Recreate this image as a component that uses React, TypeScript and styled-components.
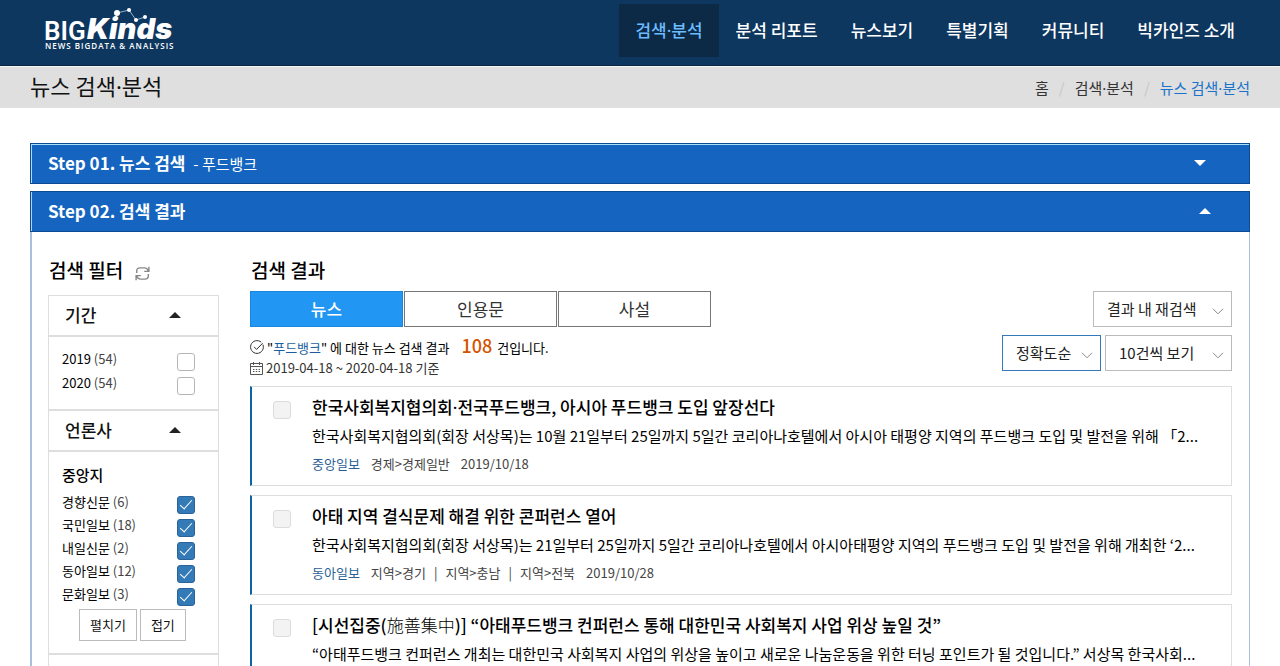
import React from "react";
import styled, { createGlobalStyle } from "styled-components";

const GlobalStyle = createGlobalStyle`
  *, *::before, *::after { box-sizing: border-box; }
  html { overflow-x: hidden; }
  body {
    margin: 0;
    background: #fff;
    color: #000;
    font-family: "Noto Sans CJK KR", "Noto Sans", sans-serif;
    font-size: 13px;
    line-height: 20px;
  }
  h1, h2, h3, p, ul, ol { margin: 0; padding: 0; font-weight: 400; }
  ul, ol { list-style: none; }
  a { color: inherit; text-decoration: none; }
  button, select, input { font-family: inherit; margin: 0; }
`;

const Header = styled.header`
  display: flex;
  justify-content: space-between;
  align-items: flex-start;
  height: 66px;
  padding: 4px 29px 0 44px;
  background: #0d375f;
  border-bottom: 1px solid #0a2745;
`;

const LogoLink = styled.a`
  display: block;
  line-height: 0;
`;

const Nav = styled.nav`
  display: flex;
  gap: 1px;
`;

const NavLink = styled.a<{ $active?: boolean }>`
  height: 53px;
  padding: 0 16px;
  font-size: 17px;
  font-weight: 500;
  line-height: 52px;
  white-space: nowrap;
  color: ${(p) => (p.$active ? "#6dbcff" : "#fff")};
  background: ${(p) => (p.$active ? "#0c2a46" : "transparent")};
`;

const Dot = styled.span`
  font-family: "Noto Sans", sans-serif;
  line-height: 1;
`;

const TitleBar = styled.div`
  display: flex;
  justify-content: space-between;
  align-items: center;
  height: 42px;
  padding: 0 30px;
  background: #dfdfdf;
  border-top: 1px solid #f4f4f4;
`;

const PageTitle = styled.h1`
  padding-bottom: 5px;
  font-size: 22px;
  line-height: 32px;
  color: #111;
`;

const Crumbs = styled.ol`
  display: flex;
  gap: 10px;
  font-size: 15px;
  line-height: 22px;
  color: #333;

  li + li::before {
    content: "/";
    margin-right: 10px;
    color: #c4c8cc;
  }
  [aria-current] { color: #1a73c9; }
`;

const Content = styled.main`
  display: flex;
  flex-direction: column;
  gap: 7px;
  padding: 35px 30px 0;
`;

const StepBar = styled.button`
  display: flex;
  justify-content: space-between;
  align-items: center;
  width: 100%;
  height: 41px;
  padding: 0 38px 2px 17px;
  border: 1px solid #0c4a94;
  background: #1565c0;
  box-shadow: inset 1px 0 #a9d7f5;
  color: #fff;
  font-size: 17px;
  font-weight: 700;
  text-align: left;

  &[aria-expanded="false"] {
    padding-right: 43px;
    box-shadow: inset 1px 1px #a9e0f5;
  }
`;

const StepKeyword = styled.span`
  margin-left: 4px;
  font-size: 15px;
  font-weight: 400;
`;

const Triangle = styled.span<{ $down?: boolean; $dark?: boolean }>`
  border: 5px solid transparent;
  border-width: ${(p) => (p.$down ? "6px 6px 0" : "0 6px 6px")};
  border-${(p) => (p.$down ? "top" : "bottom")}-color: ${(p) => (p.$dark ? "#222" : "#fff")};
`;

const StepBody = styled.div`
  display: flex;
  gap: 31px;
  padding: 24px 17px 0 16px;
  border: solid #a9bfdb;
  border-width: 0 1px 0 2px;
`;

const Sidebar = styled.aside`
  flex: 0 0 171px;
`;

const SectionTitle = styled.h2`
  display: flex;
  align-items: center;
  gap: 12px;
  height: 35px;
  padding: 0 1px 8px;
  font-size: 19px;
  font-weight: 500;
  line-height: 27px;
`;

const IconButton = styled.button`
  display: flex;
  padding: 7px 0 0;
  border: 0;
  background: none;
  color: #888;
`;

const FilterBox = styled.div`
  margin-top: 4px;
  border: solid #dedede;
  border-width: 1px 1px 0;
`;

const FilterHead = styled.button`
  display: flex;
  justify-content: space-between;
  align-items: center;
  width: 100%;
  height: 41px;
  padding: 0 37px 2px 16px;
  border: 0;
  border-bottom: 2px solid #dedede;
  background: #fff;
  color: #111;
  font-size: 17px;
  font-weight: 500;
`;

const FilterBody = styled.div`
  padding: 12px 23px 12px 13px;
  border-bottom: 2px solid #dedede;
`;

const GroupTitle = styled.h3`
  padding-bottom: 6px;
  font-size: 15px;
  font-weight: 500;
  line-height: 22px;
`;

const FilterRow = styled.label<{ $tight?: boolean }>`
  display: flex;
  justify-content: space-between;
  align-items: flex-start;
  height: ${(p) => (p.$tight ? "23px" : "24px")};
  line-height: 20px;
`;

const Count = styled.span`
  color: #444;
`;

const CheckBox = styled.input`
  appearance: none;
  display: grid;
  place-items: center;
  flex: none;
  width: 18px;
  height: 18px;
  border: 1px solid #b5b5b5;
  border-radius: 3px;
  background: #fff;

  ${FilterRow} & { margin-top: 4px; }

  &:checked {
    border-color: #2a6399;
    background: #337ab7;
  }
  &:checked::after {
    content: "";
    width: 6px;
    height: 12px;
    margin-bottom: 4px;
    border: solid #fff;
    border-width: 0 1px 1px 0;
    transform: rotate(42deg);
  }
`;

const ResultCheck = styled(CheckBox)`
  margin-top: 6px;
  border-color: #dcdcdc;
  background: #f3f3f3;
`;

const FoldButtons = styled.div`
  display: flex;
  gap: 3px;
  padding: 2px 0 0 17px;
`;

const FoldButton = styled.button`
  height: 32px;
  padding: 0 10px 2px;
  border: 1px solid #bbb;
  background: #fff;
  color: #111;
  font-size: 13px;
`;

const Results = styled.section`
  flex: 1;
  min-width: 0;
`;

const ResultTop = styled.div`
  display: flex;
  justify-content: space-between;
  height: 95px;
`;

const Tabs = styled.div`
  display: flex;
  gap: 1px;
`;

const Tab = styled.button`
  width: 153px;
  height: 36px;
  padding: 0 0 2px;
  border: 1px solid #777;
  background: #fff;
  color: #333;
  font-size: 17px;

  &[aria-selected="true"] {
    border-color: #1c86df;
    background: #2196f3;
    color: #fff;
    font-weight: 500;
  }
`;

const Summary = styled.p`
  display: flex;
  align-items: center;
  gap: 3px;
  padding-top: 8px;
  font-size: 13px;
  line-height: 20px;
`;

const Keyword = styled.span`
  color: #1a5f9e;
`;

const Total = styled.strong`
  margin: 0 5px 0 12px;
  color: #d35400;
  font-size: 18px;
  font-weight: 500;
`;

const Period = styled.p`
  display: flex;
  align-items: center;
  gap: 3px;
  color: #333;
  font-size: 13px;
  line-height: 20px;
`;

const Controls = styled.div`
  display: flex;
  flex-direction: column;
  align-items: flex-end;
  gap: 8px;
`;

const ControlRow = styled.div`
  display: flex;
  gap: 4px;
`;

const SelectWrap = styled.label<{ $width: number }>`
  display: grid;
  align-items: center;
  width: ${(p) => p.$width}px;

  & > * { grid-area: 1 / 1; }
  svg {
    justify-self: end;
    margin: 4px 8px 0 0;
    color: #888;
    pointer-events: none;
  }
`;

const Select = styled.select<{ $focus?: boolean }>`
  appearance: none;
  width: 100%;
  height: 36px;
  padding: 0 13px 2px;
  border: 1px solid ${(p) => (p.$focus ? "#337ab7" : "#bbb")};
  border-radius: 0;
  background: #fff;
  color: #222;
  font-size: 15px;
`;

const ResultList = styled.ul`
  display: flex;
  flex-direction: column;
  gap: 9px;
`;

const ResultCard = styled.li`
  display: flex;
  gap: 21px;
  height: 100px;
  padding: 8px 20px 0 21px;
  border: 1px solid #dedede;
  border-left: 2px solid #0b65a5;
`;

const ResultText = styled.div`
  flex: 1;
  min-width: 0;
`;

const ResultTitle = styled.h3`
  font-size: 17px;
  font-weight: 500;
  line-height: 24px;
  white-space: nowrap;
`;

const Hanja = styled.span`
  font-weight: 300;
`;

const Excerpt = styled.p`
  padding: 6px 0 7px;
  overflow: hidden;
  font-size: 15px;
  line-height: 22px;
  white-space: nowrap;
`;

const Meta = styled.p`
  display: flex;
  gap: 11px;
  color: #444;
  font-size: 13px;
  line-height: 20px;

  a { color: #2a5f95; }
`;

const Topics = styled.span`
  span + span::before {
    content: "|";
    margin: 0 8px;
  }
`;

const Logo = () => (
  <svg width="134" height="48" viewBox="0 0 134 48" role="img" aria-label="BIGKinds" fill="#fff">
    <text x="0" y="36" fontFamily="Roboto, sans-serif" fontSize="26" fontWeight="600">BIG</text>
    <text x="43" y="35" fontFamily="Inter, sans-serif" fontSize="29" fontWeight="900" fontStyle="italic">Kinds</text>
    <text x="1" y="45" fontFamily="'Open Sans', sans-serif" fontSize="8" fontWeight="600" letterSpacing="1">NEWS BIGDATA &amp; ANALYSIS</text>
    <path d="M73 9 L85 6 L92 16 L101 13" fill="none" stroke="#8fb0cf" strokeWidth="1" />
    <circle cx="73" cy="9" r="3" />
    <circle cx="85" cy="6" r="2" />
    <circle cx="92" cy="16" r="2" />
    <circle cx="101" cy="13" r="2" />
  </svg>
);

const RefreshIcon = () => (
  <svg width="15" height="15" viewBox="0 0 15 15" fill="none" stroke="currentColor" strokeWidth="1.4">
    <path d="M1.7 7V5Q1.7 1.9 5 1.9H9.5Q12 1.9 13.3 4.8M13.9 .8V5.4H9.2" />
    <path d="M13.3 8V10Q13.3 13.1 10 13.1H5.5Q3 13.1 1.7 10.2M1.1 14.2V9.6H5.8" />
  </svg>
);

const CheckCircleIcon = () => (
  <svg width="14" height="14" viewBox="0 0 14 14" fill="none" stroke="#333">
    <path d="M12.9 4.6A6.4 6.4 0 1 1 11.2 2.2" />
    <path d="M4 6.8L6.6 9.4L12.6 3.2" />
  </svg>
);

const CalendarIcon = () => (
  <svg width="13" height="13" viewBox="0 0 13 13" fill="none" stroke="#555">
    <path d="M.5 1.5H12.5V12.5H.5ZM.5 4.5H12.5M3.5 0V3M9.5 0V3" />
    <path d="M3 7.5H10M3 9.5H10" strokeDasharray="1.4 1.4" />
  </svg>
);

const Chevron = () => (
  <svg width="12" height="7" viewBox="0 0 12 7" fill="none" stroke="currentColor">
    <path d="M1 .8L6 5.8L11 .8" />
  </svg>
);

const Dotted = ({ text }: { text: string }) => (
  <>
    {text.split("·").map((part, i) => (
      <React.Fragment key={i}>
        {i > 0 && <Dot>·</Dot>}
        {part}
      </React.Fragment>
    ))}
  </>
);

const navItems = ["검색·분석", "분석 리포트", "뉴스보기", "특별기획", "커뮤니티", "빅카인즈 소개"];

const years = [["2019", 54], ["2020", 54]] as const;

const papers = [
  ["경향신문", 6],
  ["국민일보", 18],
  ["내일신문", 2],
  ["동아일보", 12],
  ["문화일보", 3],
] as const;

const articles = [
  {
    title: <Dotted text="한국사회복지협의회·전국푸드뱅크, 아시아 푸드뱅크 도입 앞장선다" />,
    excerpt:
      "한국사회복지협의회(회장 서상목)는 10월 21일부터 25일까지 5일간 코리아나호텔에서 아시아 태평양 지역의 푸드뱅크 도입 및 발전을 위해 「2...",
    press: "중앙일보",
    topics: ["경제>경제일반"],
    date: "2019/10/18",
  },
  {
    title: "아태 지역 결식문제 해결 위한 콘퍼런스 열어",
    excerpt:
      "한국사회복지협의회(회장 서상목)는 21일부터 25일까지 5일간 코리아나호텔에서 아시아태평양 지역의 푸드뱅크 도입 및 발전을 위해 개최한 ‘2...",
    press: "동아일보",
    topics: ["지역>경기", "지역>충남", "지역>전북"],
    date: "2019/10/28",
  },
  {
    title: (
      <>
        [시선집중(<Hanja>施善集中</Hanja>)] “아태푸드뱅크 컨퍼런스 통해 대한민국 사회복지 사업 위상 높일 것”
      </>
    ),
    excerpt:
      "“아태푸드뱅크 컨퍼런스 개최는 대한민국 사회복지 사업의 위상을 높이고 새로운 나눔운동을 위한 터닝 포인트가 될 것입니다.” 서상목 한국사회...",
  },
];

export default function App() {
  return (
    <>
      <GlobalStyle />
      <Header>
        <LogoLink href="#">
          <Logo />
        </LogoLink>
        <Nav>
          {navItems.map((item, i) => (
            <NavLink key={item} href="#" $active={i === 0}>
              <Dotted text={item} />
            </NavLink>
          ))}
        </Nav>
      </Header>

      <TitleBar>
        <PageTitle><Dotted text="뉴스 검색·분석" /></PageTitle>
        <Crumbs>
          <li><a href="#">홈</a></li>
          <li><a href="#"><Dotted text="검색·분석" /></a></li>
          <li><a href="#" aria-current="page"><Dotted text="뉴스 검색·분석" /></a></li>
        </Crumbs>
      </TitleBar>

      <Content>
        <StepBar type="button" aria-expanded={false}>
          <span>
            Step 01. 뉴스 검색 <StepKeyword>- 푸드뱅크</StepKeyword>
          </span>
          <Triangle $down />
        </StepBar>

        <div>
          <StepBar type="button" aria-expanded={true}>
            <span>Step 02. 검색 결과</span>
            <Triangle />
          </StepBar>
          <StepBody>
            <Sidebar>
              <SectionTitle>
                검색 필터
                <IconButton type="button" aria-label="필터 초기화">
                  <RefreshIcon />
                </IconButton>
              </SectionTitle>
              <FilterBox>
                <FilterHead type="button">
                  기간 <Triangle $dark />
                </FilterHead>
                <FilterBody>
                  {years.map(([year, n]) => (
                    <FilterRow key={year}>
                      <span>{year} <Count>({n})</Count></span>
                      <CheckBox type="checkbox" />
                    </FilterRow>
                  ))}
                </FilterBody>
                <FilterHead type="button">
                  언론사 <Triangle $dark />
                </FilterHead>
                <FilterBody>
                  <GroupTitle>중앙지</GroupTitle>
                  {papers.map(([name, n]) => (
                    <FilterRow key={name} $tight>
                      <span>{name} <Count>({n})</Count></span>
                      <CheckBox type="checkbox" defaultChecked />
                    </FilterRow>
                  ))}
                  <FoldButtons>
                    <FoldButton type="button">펼치기</FoldButton>
                    <FoldButton type="button">접기</FoldButton>
                  </FoldButtons>
                </FilterBody>
                <FilterHead type="button" aria-label="통합 분류" />
              </FilterBox>
            </Sidebar>

            <Results>
              <SectionTitle>검색 결과</SectionTitle>
              <ResultTop>
                <div>
                  <Tabs role="tablist">
                    <Tab type="button" role="tab" aria-selected={true}>뉴스</Tab>
                    <Tab type="button" role="tab" aria-selected={false}>인용문</Tab>
                    <Tab type="button" role="tab" aria-selected={false}>사설</Tab>
                  </Tabs>
                  <Summary>
                    <CheckCircleIcon />
                    <span>
                      "<Keyword>푸드뱅크</Keyword>" 에 대한 뉴스 검색 결과
                      <Total>108</Total>건입니다.
                    </span>
                  </Summary>
                  <Period>
                    <CalendarIcon />
                    2019-04-18 ~ 2020-04-18 기준
                  </Period>
                </div>
                <Controls>
                  <SelectWrap $width={139}>
                    <Select aria-label="재검색">
                      <option>결과 내 재검색</option>
                    </Select>
                    <Chevron />
                  </SelectWrap>
                  <ControlRow>
                    <SelectWrap $width={99}>
                      <Select aria-label="정렬" $focus>
                        <option>정확도순</option>
                      </Select>
                      <Chevron />
                    </SelectWrap>
                    <SelectWrap $width={127}>
                      <Select aria-label="보기 개수">
                        <option>10건씩 보기</option>
                      </Select>
                      <Chevron />
                    </SelectWrap>
                  </ControlRow>
                </Controls>
              </ResultTop>

              <ResultList>
                {articles.map((a, i) => (
                  <ResultCard key={i}>
                    <ResultCheck type="checkbox" aria-label="기사 선택" />
                    <ResultText>
                      <ResultTitle><a href="#">{a.title}</a></ResultTitle>
                      <Excerpt>{a.excerpt}</Excerpt>
                      {a.press && (
                        <Meta>
                          <a href="#">{a.press}</a>
                          <Topics>
                            {a.topics.map((t) => (
                              <span key={t}>{t}</span>
                            ))}
                          </Topics>
                          <span>{a.date}</span>
                        </Meta>
                      )}
                    </ResultText>
                  </ResultCard>
                ))}
              </ResultList>
            </Results>
          </StepBody>
        </div>
      </Content>
    </>
  );
}
